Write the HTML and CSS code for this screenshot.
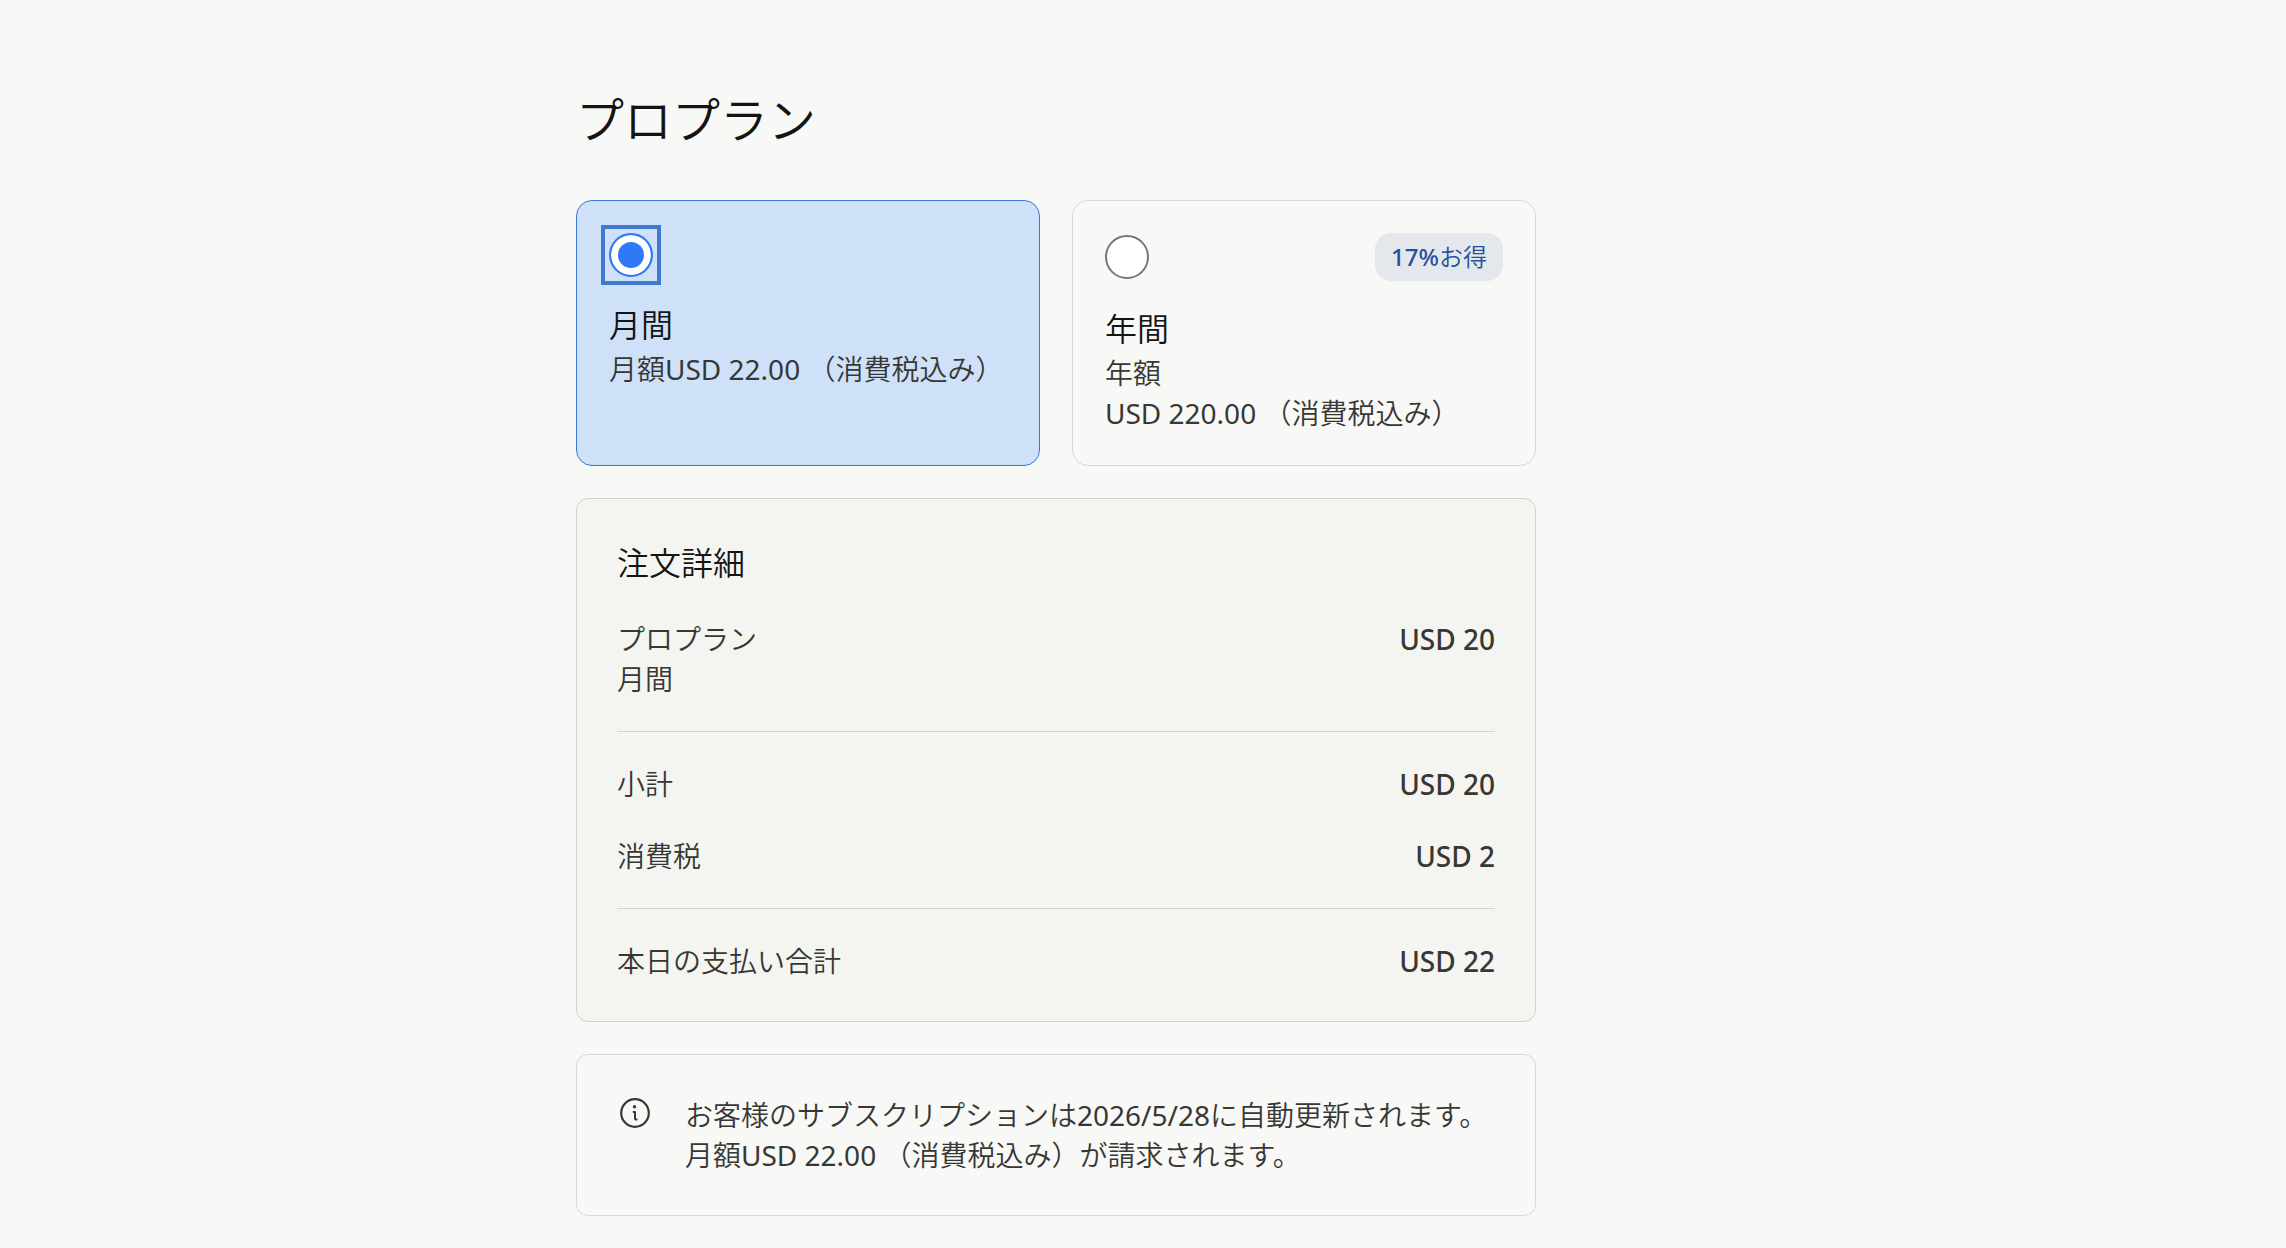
FILE: index.html
```html
<!DOCTYPE html>
<html lang="ja">
  <head>
    <meta charset="UTF-8" />
    <title>プロプラン</title>
    <link rel="stylesheet" href="styles.css">
  </head>
  <body>
    <div class="page">
      <main class="checkout">
        <h1>プロプラン</h1>

        <div class="plans" role="radiogroup" aria-label="お支払い間隔">
          <label class="plan">
            <span class="plan-top">
              <span class="radio"><input type="radio" name="interval" value="monthly" checked /></span>
            </span>
            <span class="plan-name">月間</span>
            <span class="plan-price">月額<span class="latin">USD 22.00 </span>（消費税込み）</span>
          </label>

          <label class="plan">
            <span class="plan-top">
              <span class="radio"><input type="radio" name="interval" value="yearly" /></span>
              <span class="badge"><span class="badge-number">17%</span>お得</span>
            </span>
            <span class="plan-name">年間</span>
            <span class="plan-price">年額<br /><span class="latin">USD 220.00 </span>（消費税込み）</span>
          </label>
        </div>

        <section class="order">
          <h2>注文詳細</h2>
          <dl class="rows">
            <div class="row">
              <dt>プロプラン<br />月間</dt>
              <dd>USD 20</dd>
            </div>
            <div class="row divided">
              <dt>小計</dt>
              <dd>USD 20</dd>
            </div>
            <div class="row">
              <dt>消費税</dt>
              <dd>USD 2</dd>
            </div>
            <div class="row divided">
              <dt>本日の支払い合計</dt>
              <dd>USD 22</dd>
            </div>
          </dl>
        </section>

        <section class="notice">
          <svg class="notice-icon" viewBox="0 0 36 36" fill="none" stroke="currentColor" stroke-width="2" stroke-linecap="round" stroke-linejoin="round" aria-hidden="true">
            <circle cx="18" cy="18" r="13.8" stroke-width="2.2" />
            <path d="M16.6 17H18V23Q18 24.6 19.6 24.6" />
            <circle cx="17.5" cy="11.8" r="1.7" fill="currentColor" stroke="none" />
          </svg>
          <p>
            お客様のサブスクリプションは<span class="latin">2026/5/28</span>に自動更新されます。<br />
            月額<span class="latin">USD 22.00 </span>（消費税込み）が請求されます。
          </p>
        </section>
      </main>
    </div>
  </body>
</html>
```
FILE: styles.css
```css
* {
  box-sizing: border-box;
}

body {
  margin: 0;
  background-color: #f8f8f6;
  color: #373734;
  font-family: "Noto Sans", "Noto Sans CJK JP", sans-serif;
  font-size: 28px;
  font-weight: 350;
  line-height: 40px;
}

h1,
h2,
p,
dl,
dd {
  margin: 0;
}

.page {
  max-width: 1134px;
  margin: 0 auto;
  padding: 88px 0 32px;
}

.checkout {
  display: flex;
  flex-direction: column;
  gap: 32px;
  max-width: 960px;
}

h1 {
  margin-bottom: 16px;
  color: #141413;
  font-size: 48px;
  font-weight: 350;
  line-height: 64px;
}

h2,
.plan-name {
  color: #141413;
  font-size: 32px;
  font-weight: 350;
  line-height: 48px;
}

.latin {
  font-weight: 400;
}

/* Plan cards */
.plans {
  display: grid;
  grid-template-columns: 1fr 1fr;
  gap: 32px;
}

.plan {
  display: flex;
  flex-direction: column;
  padding: 32px;
  border: 1px solid #d8d8d5;
  border-radius: 16px;
  cursor: pointer;
}

.plan:has(input:checked) {
  background-color: #cfe1f9;
  border-color: #3e79cf;
}

.plan-top {
  display: flex;
  justify-content: space-between;
  align-items: center;
  margin-bottom: 24px;
}

.radio {
  display: flex;
}

.radio:has(input:checked) {
  outline: 4px solid #3e79cf;
  outline-offset: 4px;
}

.radio input {
  appearance: none;
  width: 44px;
  height: 44px;
  margin: 0;
  border: 2px solid #767676;
  border-radius: 50%;
  outline: none;
  background-color: #fff;
}

.radio input:checked {
  border-color: #2f78f7;
  background-color: #2f78f7;
  box-shadow: inset 0 0 0 7px #fff;
}

.badge {
  padding: 4px 16px;
  border-radius: 16px;
  background-color: #e4e8ed;
  color: #26519a;
  font-size: 24px;
}

.badge-number {
  font-weight: 500;
}

/* Order details */
.order,
.notice {
  padding: 40px;
  border: 1px solid #d8d8d5;
  border-radius: 12px;
}

.order {
  background-color: #f4f5f0;
  border-color: #d2d3cf;
}

.rows {
  display: flex;
  flex-direction: column;
  gap: 32px;
  margin-top: 32px;
}

.row {
  display: flex;
  justify-content: space-between;
}

.row dd {
  font-weight: 500;
}

.divided {
  padding-top: 32px;
  border-top: 1px solid #d2d3cf;
}

.notice {
  display: flex;
  align-items: flex-start;
  gap: 32px;
}

.notice-icon {
  flex-shrink: 0;
  width: 36px;
  height: 36px;
}
```
